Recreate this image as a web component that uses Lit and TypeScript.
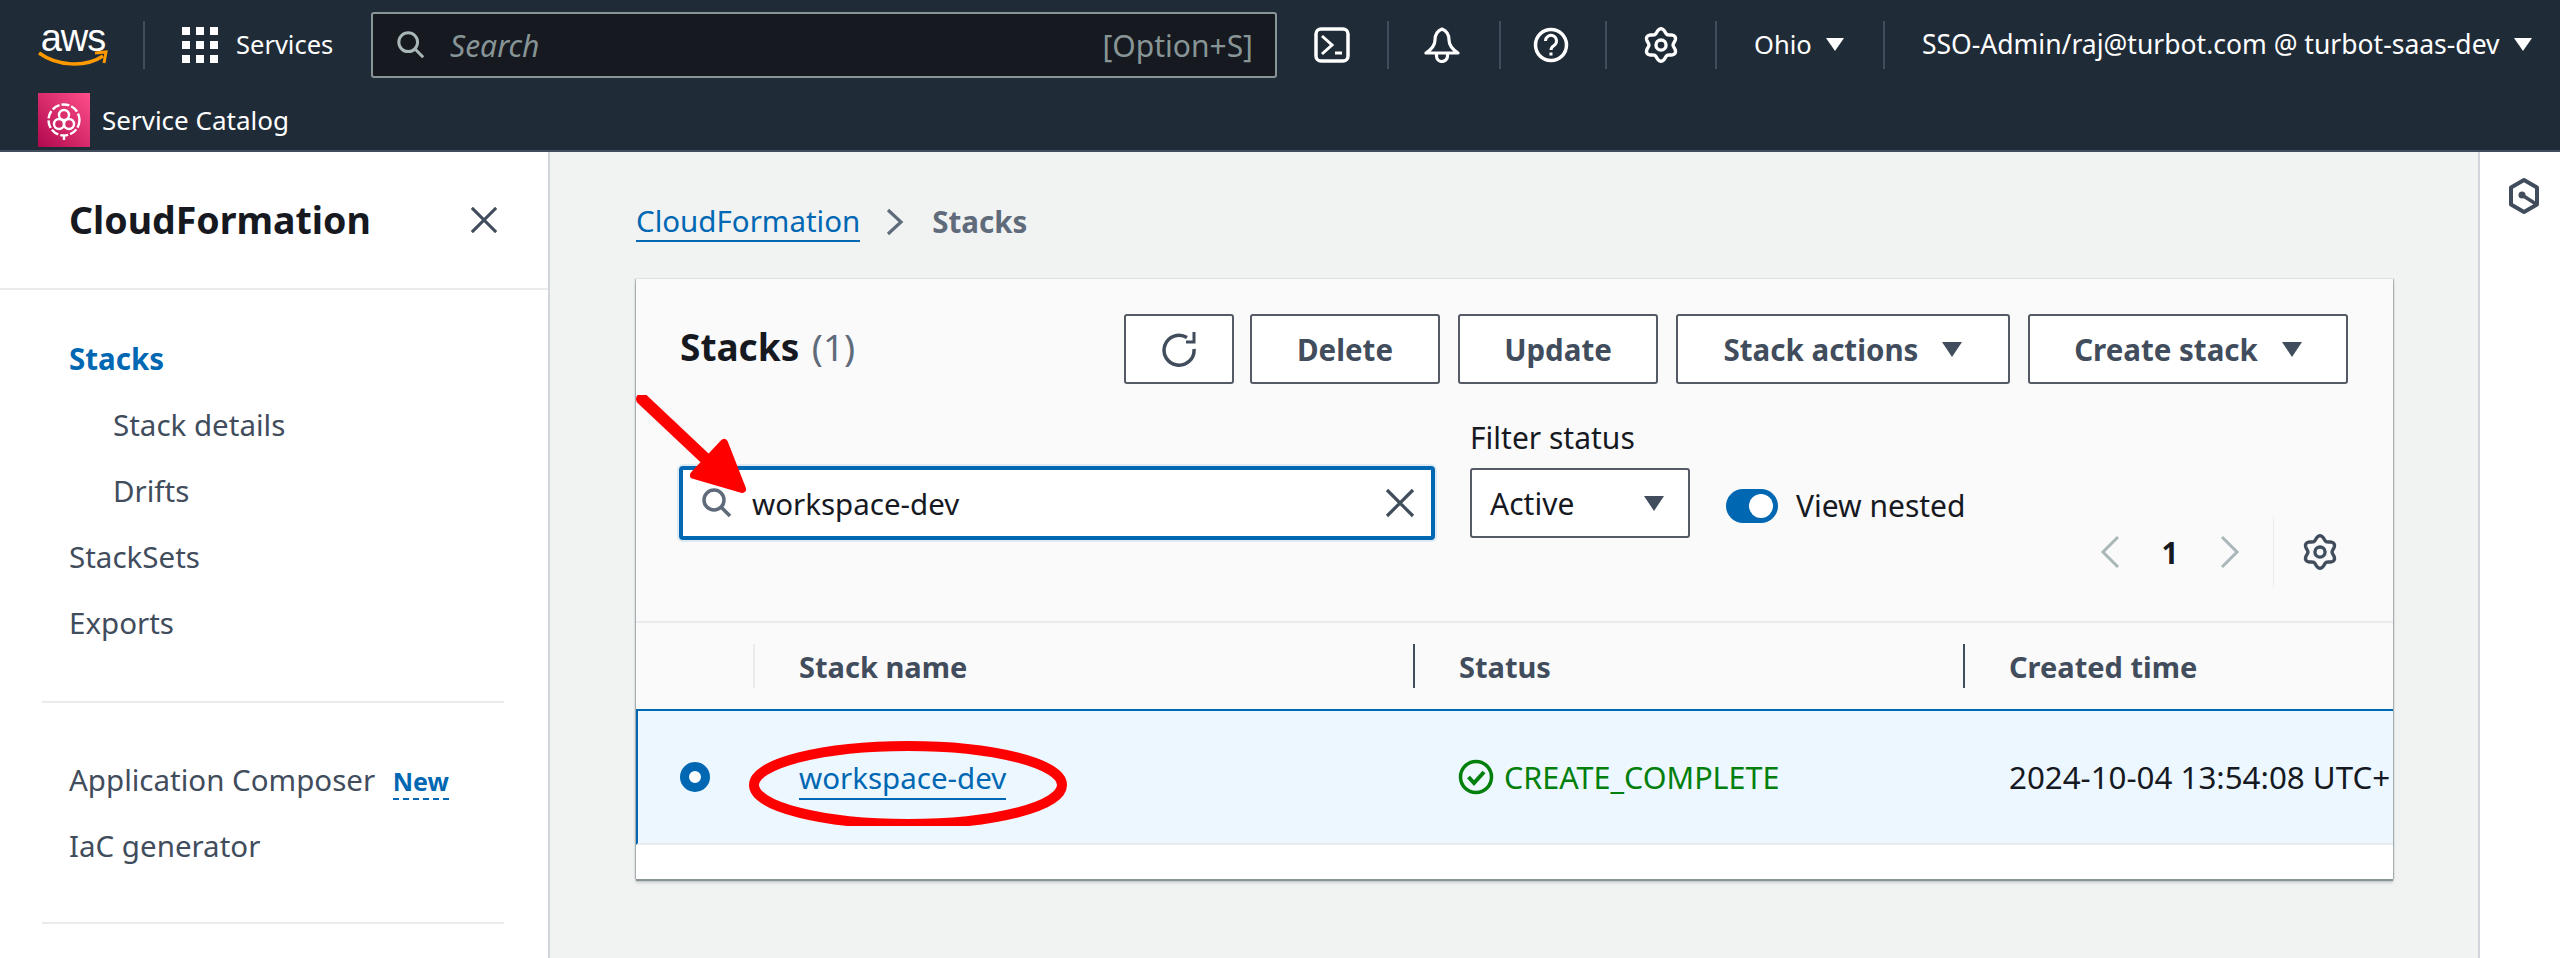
import { LitElement, css, html, svg } from "lit";
import { customElement } from "lit/decorators.js";

const navTop = [
  { label: "Stacks", active: true },
  { label: "Stack details", sub: true },
  { label: "Drifts", sub: true },
  { label: "StackSets" },
  { label: "Exports" },
];

// six lobed gear outline, traced around a wavy radius
const gearPath = Array.from({ length: 72 }, (_, i) => {
  const a = (i / 72) * Math.PI * 2;
  const r = 12.6 + 1.9 * Math.cos(6 * a);
  const x = 16 + r * Math.sin(a);
  const y = 16 - r * Math.cos(a);
  return `${i ? "L" : "M"}${x.toFixed(2)} ${y.toFixed(2)}`;
}).join("") + "z";

const gear = svg`<path d=${gearPath} fill="none" stroke="currentColor" stroke-width="3" stroke-linejoin="round"/><circle cx="16" cy="16" r="4.500" fill="none" stroke="currentColor" stroke-width="3"/>`;

@customElement("app-root")
export class AppRoot extends LitElement {
  protected render() {
    return html`
      <header class="top">
        <div class="top-row">
          <div class="logo">
            <span class="logo-text">aws</span>
            <svg class="smile" viewBox="0 0 70 18">
              <path d="M1 3c18 13 46 15 64 3" fill="none" stroke="#f90" stroke-width="3.500"/>
              <path d="M57 3l11-1-2 11" fill="none" stroke="#f90" stroke-width="3"/>
            </svg>
          </div>
          <span class="sep sep-logo"></span>
          <svg class="grid-icon" viewBox="0 0 36 36" fill="#fff">
            ${[0, 14, 28].map((y) =>
              [0, 14, 28].map((x) => svg`<rect x=${x} y=${y} width="8" height="8"/>`),
            )}
          </svg>
          <span class="services">Services</span>
          <div class="search">
            <svg class="search-icon" viewBox="0 0 32 32" fill="none" stroke="currentColor" stroke-width="3.200">
              <circle cx="13" cy="13" r="10"/>
              <path d="M20 20l9 9"/>
            </svg>
            <span class="search-ph">Search</span>
            <span class="search-key">[Option+S]</span>
          </div>
          <div class="tool first">
            <svg viewBox="0 0 36 36" fill="none" stroke="#fff" stroke-width="3.500">
              <rect x="2" y="2" width="32" height="32" rx="5"/>
              <path d="M8 9l10 9-10 9" stroke-width="3"/>
              <path d="M21 26h7" stroke-width="3"/>
            </svg>
          </div>
          <div class="tool t-bell">
            <svg viewBox="0 0 36 36" fill="none" stroke="#fff" stroke-width="3.200" stroke-linejoin="round">
              <path d="M18 2c-5 2-7 6-7 11 0 5-3 9-9 13h32c-6-4-9-8-9-13 0-5-2-9-7-11z"/>
              <path d="M12.500 26v3a5.500 5.500 0 0 0 11 0v-3"/>
            </svg>
          </div>
          <div class="tool t-help">
            <svg viewBox="0 0 36 36" fill="none" stroke="#fff" stroke-width="3.500">
              <circle cx="18" cy="18" r="15.500"/>
              <path d="M12.500 14a5.500 5.500 0 1 1 8.500 4.500c-2 1.300-3 2.500-3 4.500" stroke-width="3"/>
              <path d="M18 25.500v3" stroke-width="3"/>
            </svg>
          </div>
          <div class="tool t-gear">
            <svg viewBox="0 0 32 32" class="white-gear">${gear}</svg>
          </div>
          <div class="region">
            <span>Ohio</span><span class="caret white"></span>
          </div>
          <div class="user">
            <span>SSO-Admin/raj@turbot.com @ turbot-saas-dev</span><span class="caret white"></span>
          </div>
        </div>
        <div class="crumb-row">
          <svg class="sc-icon" viewBox="0 0 52 54">
            <defs>
              <linearGradient id="sc" x1="0" y1="1" x2="1" y2="0">
                <stop offset="0" stop-color="#b0084d"/>
                <stop offset="1" stop-color="#ff4f8b"/>
              </linearGradient>
            </defs>
            <rect width="52" height="54" fill="url(#sc)"/>
            <g fill="none" stroke="#fff" stroke-width="2.400">
              <circle cx="26" cy="27" r="15.500" stroke-dasharray="8 2"/>
              <circle cx="26" cy="22" r="5"/>
              <circle cx="21" cy="31" r="5"/>
              <circle cx="31" cy="31" r="5"/>
              <path d="M26 42v5"/>
            </g>
          </svg>
          <span>Service Catalog</span>
        </div>
      </header>

      <div class="body">
        <nav class="side">
          <div class="side-head">
            <span class="side-title">CloudFormation</span>
            <svg class="side-close" viewBox="0 0 30 30" fill="none" stroke="#414d5c" stroke-width="3.200">
              <path d="M2 2l26 26M28 2L2 28"/>
            </svg>
          </div>
          <ul class="nav first-nav">
            ${navTop.map(
              (n) => html`<li class="${n.active ? "active" : ""} ${n.sub ? "sub" : ""}">${n.label}</li>`,
            )}
          </ul>
          <hr />
          <ul class="nav second-nav">
            <li>Application Composer <span class="new">New</span></li>
            <li>IaC generator</li>
          </ul>
          <hr />
        </nav>

        <main class="main">
          <div class="breadcrumb">
            <a>CloudFormation</a>
            <svg viewBox="0 0 20 30" fill="none" stroke="#5f6b7a" stroke-width="3.200">
              <path d="M3 3l13 12L3 27"/>
            </svg>
            <span>Stacks</span>
          </div>

          <section class="card">
            <div class="card-top">
              <div class="title-row">
                <h2>Stacks <span>(1)</span></h2>
                <div class="actions">
                  <button class="btn refresh" aria-label="Refresh">
                    <svg viewBox="0 0 36 36" fill="none" stroke="#414d5c" stroke-width="3.500">
                      <path d="M26 6.500A15 15 0 1 0 33 18"/>
                      <path d="M25 11h8V1" stroke-width="3"/>
                    </svg>
                  </button>
                  <button class="btn w-delete">Delete</button>
                  <button class="btn w-update">Update</button>
                  <button class="btn w-actions">Stack actions<span class="caret"></span></button>
                  <button class="btn w-create">Create stack<span class="caret"></span></button>
                </div>
              </div>

              <div class="filter-row">
                <div class="find">
                  <svg class="find-icon" viewBox="0 0 32 32" fill="none" stroke="#5f6b7a" stroke-width="3.500">
                    <circle cx="13" cy="13" r="10"/>
                    <path d="M20 20l9 9"/>
                  </svg>
                  <span class="find-text">workspace-dev</span>
                  <svg class="find-clear" viewBox="0 0 30 30" fill="none" stroke="#414d5c" stroke-width="3.200">
                    <path d="M2 2l26 26M28 2L2 28"/>
                  </svg>
                </div>
                <div class="status-filter">
                  <label>Filter status</label>
                  <div class="select">Active<span class="caret"></span></div>
                </div>
                <div class="toggle-wrap">
                  <span class="toggle"></span>
                  <span>View nested</span>
                </div>
              </div>

              <div class="pager">
                <svg class="chev" viewBox="0 0 20 34" fill="none" stroke="#aab7b8" stroke-width="3"><path d="M18 2L3 17l15 15"/></svg>
                <span class="page">1</span>
                <svg class="chev" viewBox="0 0 20 34" fill="none" stroke="#aab7b8" stroke-width="3"><path d="M2 2l15 15L2 32"/></svg>
                <span class="pager-sep"></span>
                <svg viewBox="0 0 32 32" class="pager-gear">${gear}</svg>
              </div>
            </div>

            <div class="thead">
              <div class="th-check"></div>
              <div class="th th-name">Stack name</div>
              <div class="th th-status">Status</div>
              <div class="th th-time">Created time</div>
            </div>

            <div class="row">
              <div class="radio-cell"><span class="radio"></span></div>
              <div class="td-name"><a>workspace-dev</a></div>
              <div class="td-status">
                <svg viewBox="0 0 36 36" fill="none" stroke="#037f0c" stroke-width="3.500">
                  <circle cx="18" cy="18" r="15.500"/>
                  <path d="M10.500 18l5.500 6 10-11" stroke-width="4"/>
                </svg>
                CREATE_COMPLETE
              </div>
              <div class="td-time">2024-10-04 13:54:08 UTC+</div>
            </div>
            <div class="card-foot"></div>

            <svg class="mark-arrow" viewBox="0 0 120 110">
              <path d="M6 4l68 64" stroke="#f00" stroke-width="12" stroke-linecap="round"/>
              <path d="M88 48l18 46-48-14z" fill="#f00" stroke="#f00" stroke-width="8" stroke-linejoin="round"/>
            </svg>
            <svg class="mark-ring" viewBox="0 0 320 86">
              <ellipse cx="160" cy="45" rx="154" ry="39" fill="none" stroke="#f00" stroke-width="10"/>
            </svg>
          </section>
        </main>

        <aside class="rail">
          <svg viewBox="0 0 32 36" fill="none" stroke="#414d5c" stroke-width="4" stroke-linejoin="round">
            <path d="M16 2l13 7.500v17L16 34 3 26.500v-17z"/>
            <circle cx="14" cy="17" r="3.500" fill="#414d5c" stroke="none"/>
            <path d="M14 17l14 9" stroke-width="3.500"/>
          </svg>
        </aside>
      </div>
    `;
  }

  static styles = css`
    :host {
      display: block;
      width: 2560px;
      height: 958px;
      overflow: hidden;
      font-family: "Noto Sans", "Open Sans", sans-serif;
      font-size: 29.5px;
      color: #16191f;
      background: #f1f3f3;
    }

    svg {
      display: block;
      flex: none;
    }

    /* top bar */
    .top {
      height: 150px;
      background: #202b38;
      border-bottom: 2px solid #414d5c;
      color: #fff;
    }

    .top-row {
      display: flex;
      align-items: center;
      height: 90px;
      padding-left: 38px;
    }

    .logo {
      width: 70px;
      height: 42px;
    }

    .logo-text {
      display: block;
      font-family: "Liberation Sans", sans-serif;
      font-size: 38px;
      line-height: 28px;
      text-align: center;
      letter-spacing: -1px;
    }

    .smile {
      width: 70px;
      height: 18px;
      margin-top: -2px;
    }

    .sep {
      width: 2px;
      height: 48px;
      background: #414d5c;
      flex: none;
    }

    .sep-logo {
      margin-left: 35px;
    }

    .grid-icon {
      width: 36px;
      height: 36px;
      margin-left: 37px;
    }

    .services {
      margin-left: 18px;
      width: 99px;
      padding-bottom: 2px;
      font-size: 25.5px;
      white-space: nowrap;
    }

    .search {
      display: flex;
      align-items: center;
      width: 906px;
      height: 66px;
      box-sizing: border-box;
      margin-left: 36px;
      padding: 0 22px 0 23px;
      background: #16191f;
      border: 2px solid #879596;
      border-radius: 3px;
      color: #879596;
      font-size: 30px;
    }

    .search-icon {
      width: 30px;
      height: 30px;
      color: #aab7b8;
    }

    .search-ph {
      margin-left: 24px;
      font-style: italic;
    }

    .search-key {
      margin-left: auto;
    }

    .tool {
      display: flex;
      align-items: center;
      justify-content: center;
      width: 110px;
      height: 48px;
      border-left: 2px solid #414d5c;
      box-sizing: border-box;
    }

    .tool.first {
      border-left: 0;
    }

    .t-bell {
      width: 112px;
      padding-right: 4px;
    }

    .t-help {
      width: 106px;
      padding-right: 4px;
    }

    .tool svg {
      width: 36px;
      height: 36px;
    }

    .white-gear {
      color: #fff;
    }

    .region,
    .user {
      display: flex;
      align-items: center;
      height: 48px;
      box-sizing: border-box;
      border-left: 2px solid #414d5c;
      white-space: nowrap;
      padding-bottom: 2px;
    }

    .region {
      width: 168px;
      padding-left: 37px;
      font-size: 25.500px;
    }

    .user {
      padding-left: 37px;
      font-size: 26.500px;
    }

    .caret {
      display: inline-block;
      flex: none;
      width: 0;
      height: 0;
      margin-left: 14px;
      border-left: 10px solid transparent;
      border-right: 10px solid transparent;
      border-top: 15px solid #414d5c;
    }

    .caret.white {
      border-top-color: #fff;
      border-left-width: 9px;
      border-right-width: 9px;
      border-top-width: 13px;
    }

    .crumb-row {
      display: flex;
      align-items: center;
      height: 56px;
      margin-top: 2px;
      padding-left: 38px;
      font-size: 26px;
    }

    .sc-icon {
      width: 52px;
      height: 54px;
      margin-right: 12px;
    }

    /* page body */
    .body {
      display: flex;
      height: 806px;
    }

    .side {
      width: 548px;
      flex: none;
      background: #fff;
      border-right: 2px solid #d1d5db;
    }

    .side-head {
      display: flex;
      align-items: center;
      justify-content: space-between;
      height: 136px;
      padding: 0 50px 0 69px;
      border-bottom: 2px solid #e9ebed;
    }

    .side-title {
      font-size: 37.500px;
      font-weight: 700;
      line-height: 136px;
    }

    .side-close {
      width: 28px;
      height: 28px;
    }

    .nav {
      list-style: none;
      margin: 0;
      padding: 36px 0 45px 69px;
      color: #414d5c;
    }

    .nav li {
      height: 66px;
      line-height: 66px;
      white-space: nowrap;
    }

    .nav .sub {
      padding-left: 44px;
    }

    .nav .active {
      color: #0067b3;
      font-weight: 700;
    }

    .second-nav {
      padding-top: 44px;
      padding-bottom: 43px;
    }

    .new {
      margin-left: 10px;
      color: #0067b3;
      font-size: 25px;
      font-weight: 700;
      border-bottom: 2px dashed #0067b3;
    }

    .side hr {
      height: 2px;
      margin: 0 44px 0 42px;
      border: 0;
      background: #e9ebed;
    }

    /* main column */
    .main {
      width: 1928px;
      flex: none;
      box-sizing: border-box;
      padding: 0 85px 0 86px;
    }

    .breadcrumb {
      display: flex;
      align-items: center;
      height: 127px;
      box-sizing: border-box;
      padding-top: 12px;
      color: #5f6b7a;
      font-weight: 700;
    }

    .breadcrumb a {
      color: #0067b3;
      font-weight: 400;
      border-bottom: 2px solid #0067b3;
      line-height: 38px;
    }

    .breadcrumb svg {
      width: 20px;
      height: 30px;
      margin: 0 27px 0 25px;
    }

    .card {
      position: relative;
      height: 600px;
      background: #fff;
      box-shadow: 0 2px 1px #879596, 0 4px 3px rgba(0, 28, 36, 0.15), -1px 0 1px rgba(0, 28, 36, 0.25), 1px 0 1px rgba(0, 28, 36, 0.25);
    }

    .card-top {
      position: relative;
      height: 342px;
      background: #fafafa;
      border-bottom: 2px solid #e9ebed;
    }

    .title-row {
      display: flex;
      align-items: flex-start;
      justify-content: space-between;
      padding: 35px 45px 0 44px;
    }

    h2 {
      margin: 0;
      font-size: 37px;
      font-weight: 700;
      line-height: 66px;
    }

    h2 span {
      margin-left: 3px;
      color: #5f6b7a;
      font-weight: 400;
    }

    .actions {
      display: flex;
      gap: 18px;
    }

    .btn {
      display: flex;
      align-items: center;
      justify-content: center;
      height: 70px;
      padding: 0;
      box-sizing: border-box;
      background: #fff;
      border: 2px solid #545b64;
      border-radius: 3px;
      color: #414d5c;
      font: 700 29.5px "Noto Sans", sans-serif;
      white-space: nowrap;
    }

    .btn .caret {
      margin-left: 24px;
    }

    .refresh {
      width: 110px;
      margin-right: -2px;
    }

    .refresh svg {
      width: 36px;
      height: 36px;
    }

    .w-delete {
      width: 190px;
    }

    .w-update {
      width: 200px;
    }

    .w-actions {
      width: 334px;
    }

    .w-create {
      width: 320px;
    }

    .filter-row {
      display: flex;
      align-items: flex-end;
      padding: 0 0 0 43px;
      margin-top: 43px;
    }

    .find {
      display: flex;
      align-items: center;
      width: 756px;
      height: 74px;
      box-sizing: border-box;
      margin-bottom: -2px;
      padding: 0 16px 0 18px;
      background: #fff;
      border: 4px solid #0067b3;
      border-radius: 4px;
      box-shadow: 0 0 0 2px #ddeaf3;
    }

    .find-icon {
      width: 32px;
      height: 32px;
    }

    .find-text {
      margin-left: 19px;
    }

    .find-clear {
      width: 30px;
      height: 30px;
      margin-left: auto;
    }

    .status-filter {
      margin-left: 35px;
    }

    .status-filter label {
      display: block;
      height: 41px;
      font-size: 30px;
      line-height: 21px;
      white-space: nowrap;
    }

    .select {
      display: flex;
      align-items: center;
      justify-content: space-between;
      width: 220px;
      height: 70px;
      box-sizing: border-box;
      padding: 0 24px 0 18px;
      background: #fff;
      border: 2px solid #545b64;
      border-radius: 3px;
      font-size: 30px;
    }

    .toggle-wrap {
      display: flex;
      align-items: center;
      gap: 18px;
      margin: 0 0 12px 36px;
      font-size: 30px;
      white-space: nowrap;
    }

    .toggle {
      position: relative;
      width: 52px;
      height: 34px;
      border-radius: 17px;
      background: #0067b3;
    }

    .toggle::after {
      content: "";
      position: absolute;
      top: 5px;
      right: 5px;
      width: 24px;
      height: 24px;
      border-radius: 50%;
      background: #fff;
    }

    .pager {
      position: absolute;
      top: 238px;
      right: 55px;
      display: flex;
      align-items: center;
      height: 70px;
    }

    .chev {
      width: 20px;
      height: 34px;
    }

    .page {
      width: 100px;
      text-align: center;
      font-weight: 700;
    }

    .pager-sep {
      width: 1px;
      height: 70px;
      margin: 0 28px 0 33px;
      background: #e9ebed;
    }

    .pager-gear {
      width: 36px;
      height: 36px;
      color: #414d5c;
    }

    .thead {
      display: flex;
      align-items: center;
      height: 86px;
      background: #fafafa;
      color: #414d5c;
      font-weight: 700;
      font-size: 29px;
    }

    .th-check {
      width: 117px;
      flex: none;
    }

    .th {
      display: flex;
      align-items: center;
      height: 44px;
      box-sizing: border-box;
      padding-left: 44px;
      border-left: 2px solid #414d5c;
      white-space: nowrap;
    }

    .th-name {
      width: 660px;
      border-left-color: #e9ebed;
    }

    .th-status {
      width: 550px;
    }

    .th-time {
      flex: 1;
    }

    .row {
      display: flex;
      align-items: center;
      height: 132px;
      background: #ecf7ff;
      border-top: 2px solid #0067b3;
      border-bottom: 2px solid #e9ebed;
      border-left: 2px solid #0067b3;
      white-space: nowrap;
    }

    .radio-cell {
      width: 115px;
      flex: none;
      padding-left: 42px;
      box-sizing: border-box;
    }

    .radio {
      display: block;
      width: 12px;
      height: 12px;
      border: 9px solid #0067b3;
      border-radius: 50%;
      background: #fff;
    }

    .td-name {
      width: 660px;
      flex: none;
      padding-left: 46px;
      box-sizing: border-box;
    }

    .td-name a {
      color: #0067b3;
      border-bottom: 2px solid #0067b3;
    }

    .td-status {
      display: flex;
      align-items: center;
      gap: 10px;
      width: 550px;
      flex: none;
      box-sizing: border-box;
      padding-left: 45px;
      color: #037f0c;
      font-size: 30.500px;
    }

    .td-status svg {
      width: 36px;
      height: 36px;
    }

    .td-time {
      padding-left: 46px;
      font-size: 31.300px;
    }

    .card-foot {
      height: 32px;
      background: #fff;
    }

    .mark-arrow {
      position: absolute;
      left: 0;
      top: 116px;
      width: 120px;
      height: 110px;
    }

    .mark-ring {
      position: absolute;
      left: 112px;
      top: 461px;
      width: 320px;
      height: 86px;
    }

    /* right rail */
    .rail {
      flex: 1;
      background: #fff;
      border-left: 2px solid #d1d5db;
      padding: 26px 0 0 28px;
    }

    .rail svg {
      width: 32px;
      height: 36px;
    }
  `;
}

declare global {
  interface HTMLElementTagNameMap {
    "app-root": AppRoot;
  }
}
